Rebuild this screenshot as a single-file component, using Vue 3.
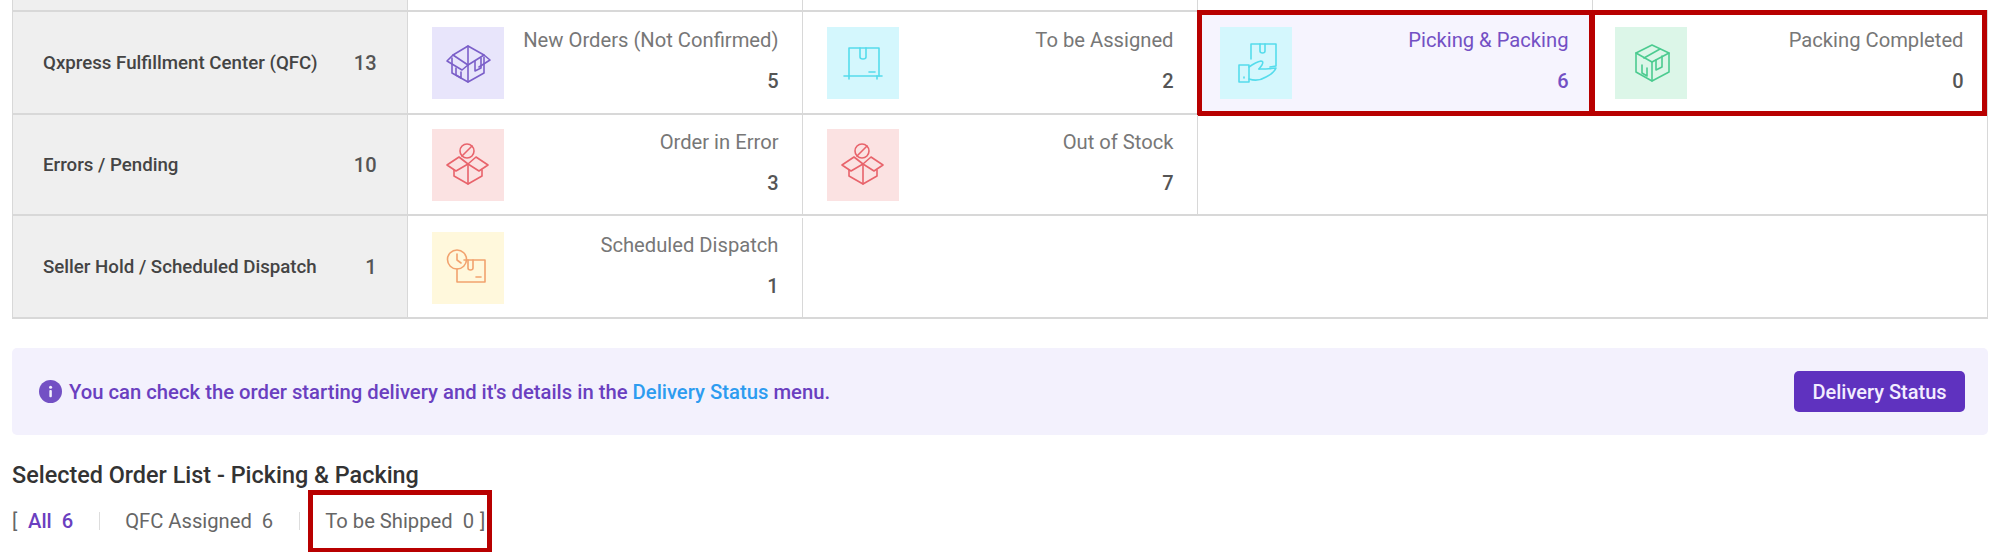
<script setup>
const icons = {
  openBox: [
    'M20 31V46L36 55L52 46V30',
    'M36 19V55',
    'M21 28L36 19L52 28',
    'M36 38L21 28L15 34L30 43Z',
    'M36 38L52 28L58 33L47 40',
    'M43 34V44L49 41V31',
    'M24 41V48L29 51V45'
  ],
  shelfBox: [
    'M22 49V21H52V49',
    'M33 21V30Q33 32 36 32Q39 32 39 30V21',
    'M42 45H48',
    'M17 49H55',
    'M22 49V52M50 49V52'
  ],
  handBox: [
    'M31 32V17H56V39L50 40',
    'M40 17V24Q40 26 42.5 26Q45 26 45 24V17',
    'M19 38H29V55H19Z',
    'M29 40Q36 35 41 34Q44 34 42 38L39 42',
    'M39 42Q48 42 56 41Q54 46 46 50Q38 55 29 52',
    'M24 50V51'
  ],
  cube: [
    'M37 18L54 26V45L37 54L21 45V26Z',
    'M21 26L37 35L54 26',
    'M37 35V54',
    'M45 22L29 31',
    'M41 33V43L47 40V29',
    'M27 38V46L32 49V41'
  ],
  blockedBox: [
    'M35 15A7 7 0 1 0 35 29A7 7 0 1 0 35 15Z',
    'M30 27L40 17',
    'M22 41V47L36 55L50 47V41',
    'M36 35V55',
    'M36 35L27 28L15 36L24 42Z',
    'M36 35L44 28L56 36L47 42Z'
  ],
  clockBox: [
    'M25 18A9.5 9.5 0 1 0 25 37A9.5 9.5 0 1 0 25 18Z',
    'M25 22V28L29 31',
    'M32 28H53V50H25V37',
    'M36 28V36Q36 38 38.5 38Q41 38 41 36V28',
    'M44 45H49'
  ]
}

const rows = [
  {
    name: 'Qxpress Fulfillment Center (QFC)',
    count: 13,
    cells: [
      { label: 'New Orders (Not Confirmed)', value: 5, icon: 'openBox', tone: 'purple' },
      { label: 'To be Assigned', value: 2, icon: 'shelfBox', tone: 'cyan' },
      { label: 'Picking & Packing', value: 6, icon: 'handBox', tone: 'cyan', active: true, marked: true },
      { label: 'Packing Completed', value: 0, icon: 'cube', tone: 'green', marked: true }
    ]
  },
  {
    name: 'Errors / Pending',
    count: 10,
    short: true,
    cells: [
      { label: 'Order in Error', value: 3, icon: 'blockedBox', tone: 'red' },
      { label: 'Out of Stock', value: 7, icon: 'blockedBox', tone: 'red' }
    ]
  },
  {
    name: 'Seller Hold / Scheduled Dispatch',
    count: 1,
    cells: [
      { label: 'Scheduled Dispatch', value: 1, icon: 'clockBox', tone: 'yellow' }
    ]
  }
]
</script>

<template>
  <div class="page">
    <div class="board">
      <div class="stub">
        <div class="stub-head"></div>
        <div class="stub-cell"></div>
        <div class="stub-cell"></div>
        <div class="stub-cell"></div>
      </div>
      <div v-for="row in rows" :key="row.name" class="row" :class="{ 'row--short': row.short }">
        <div class="row-head">
          <span class="row-name">{{ row.name }}</span>
          <span class="row-count">{{ row.count }}</span>
        </div>
        <div
          v-for="cell in row.cells"
          :key="cell.label"
          class="cell"
          :class="{ 'cell--active': cell.active, 'cell--marked': cell.marked }"
        >
          <div class="tile" :class="`tile--${cell.tone}`">
            <svg viewBox="0 0 72 72" width="72" height="72" fill="none" stroke="currentColor" stroke-width="1.6" stroke-linejoin="round" stroke-linecap="round">
              <path v-for="d in icons[cell.icon]" :key="d" :d="d" />
            </svg>
          </div>
          <div class="cell-text">
            <span class="cell-label">{{ cell.label }}</span>
            <span class="cell-value">{{ cell.value }}</span>
          </div>
        </div>
      </div>
    </div>

    <div class="notice">
      <div class="notice-msg">
        <svg class="info" viewBox="0 0 24 24" width="23" height="23">
          <circle cx="12" cy="12" r="12" fill="#7350c4" />
          <rect x="10.8" y="10.5" width="2.6" height="7.5" rx="1" fill="#f3f1fd" />
          <circle cx="12.1" cy="7.6" r="1.6" fill="#f3f1fd" />
        </svg>
        <p class="notice-text">You can check the order starting delivery and it's details in the <a class="notice-link">Delivery Status</a> menu.</p>
      </div>
      <button class="notice-btn" type="button">Delivery Status</button>
    </div>

    <h3 class="list-title">Selected Order List - Picking &amp; Packing</h3>

    <div class="filters">
      <span class="bracket">[</span>
      <span class="filter filter--on">All<b>6</b></span>
      <i class="sep"></i>
      <span class="filter">QFC Assigned<b>6</b></span>
      <i class="sep"></i>
      <span class="filter filter--marked">To be Shipped<b>0</b></span>
      <span class="bracket bracket--end">]</span>
    </div>
  </div>
</template>

<style>
html,
body {
  overflow: hidden;
  background: #fff;
}
</style>

<style scoped>
.page {
  width: 1976px;
  height: 552px;
  margin-left: 12px;
  font-family: Roboto, "Liberation Sans", sans-serif;
  position: relative;
}

.board {
  border-left: 1px solid #d8d8d8;
  border-bottom: 2px solid #d8d8d8;
  box-sizing: border-box;
  width: 1976px;
}

.stub {
  display: flex;
  height: 10px;
}

.stub-head {
  width: 394.5px;
  background: #efefef;
  border-right: 1.5px solid #d8d8d8;
  box-sizing: border-box;
}

.stub-cell {
  width: 395px;
  border-right: 1.5px solid #d8d8d8;
  box-sizing: border-box;
}

.row {
  display: flex;
  height: 103px;
  border-top: 2px solid #d8d8d8;
  border-right: 1.5px solid #d8d8d8;
  box-sizing: border-box;
}

.row--short {
  height: 101px;
}

.row:last-child {
  padding-top: 2px;
}

.row-head {
  width: 394.5px;
  flex: none;
  box-sizing: border-box;
  padding: 0 30px;
  display: flex;
  align-items: center;
  justify-content: space-between;
  background: #efefef;
  border-right: 1.5px solid #d8d8d8;
}

.row:last-child .row-head {
  margin-top: -2px;
}

.row-name {
  font-size: 18.7px;
  font-weight: 500;
  color: #444;
}

.row-count {
  font-size: 20px;
  font-weight: 500;
  color: #555;
}

.cell {
  width: 395px;
  flex: none;
  box-sizing: border-box;
  padding: 0 23px 0 24px;
  display: flex;
  align-items: center;
  gap: 15px;
  border-right: 1.5px solid #d8d8d8;
  position: relative;
}

.cell--active {
  background: #f6f4fe;
}

.cell--active .cell-label,
.cell--active .cell-value {
  color: #7350c4;
}

.cell--marked {
  padding-left: 22px;
}

/* review markup drawn over the cell */
.cell--marked::after {
  content: "";
  position: absolute;
  top: -2px;
  left: -1px;
  right: -2px;
  bottom: -3px;
  border: 5px solid #b80000;
  pointer-events: none;
}

.cell--marked:last-child::after {
  left: -3px;
  right: 0;
}

.tile {
  width: 72px;
  height: 72px;
  flex: none;
}

.tile svg {
  display: block;
}

.tile--purple {
  background: #e8e5fb;
  color: #7b5fc9;
}

.tile--cyan {
  background: #d4f7fd;
  color: #55dcec;
}

.tile--green {
  background: #dcf6e8;
  color: #4ccb90;
}

.tile--red {
  background: #fbe2e2;
  color: #e8636b;
}

.tile--yellow {
  background: #fff8dc;
  color: #f2a26e;
}

.cell-text {
  flex: 1;
  height: 72px;
  display: flex;
  flex-direction: column;
  align-items: flex-end;
  justify-content: space-between;
}

.cell-label {
  font-size: 20.2px;
  line-height: 26px;
  color: #777;
  white-space: nowrap;
}

.cell-value {
  font-size: 20px;
  font-weight: 500;
  line-height: 26px;
  margin-bottom: 5px;
  color: #555;
}

.notice {
  margin-top: 29px;
  height: 87px;
  box-sizing: border-box;
  padding: 0 23px 0 27px;
  display: flex;
  align-items: center;
  justify-content: space-between;
  background: #f3f1fd;
  border-radius: 5px;
}

.notice-msg {
  display: flex;
  align-items: center;
  gap: 7px;
}

.notice-text {
  margin: 0;
  font-size: 20.25px;
  font-weight: 500;
  color: #6a3fc0;
}

.info {
  flex: none;
}

.notice-link {
  color: #2d9cf0;
}

.notice-btn {
  width: 171px;
  height: 41px;
  border: 0;
  border-radius: 5px;
  background: #5f32bf;
  color: #f3edff;
  font-family: inherit;
  font-size: 20px;
  font-weight: 500;
}

.list-title {
  margin: 26px 0 0;
  font-size: 23.4px;
  line-height: 28px;
  font-weight: 500;
  color: #333;
}

.filters {
  margin-top: 18px;
  display: flex;
  align-items: center;
  height: 28px;
  font-size: 20.2px;
  color: #666;
}

.bracket {
  width: 16px;
  font-size: 20px;
}

.bracket--end {
  width: auto;
  margin-left: 6px;
}

.filter {
  display: inline-flex;
  gap: 10px;
  position: relative;
}

.filter b {
  font-weight: 400;
}

.filter--on {
  color: #6a3fc0;
  font-weight: 500;
}

.filter--on b {
  font-weight: 500;
}

.sep {
  width: 1px;
  height: 18px;
  margin: 0 25.5px;
  background: #ddd;
}

/* review markup round the third filter */
.filter--marked::after {
  content: "";
  position: absolute;
  top: -19px;
  bottom: -20px;
  left: -17px;
  right: -18px;
  border: 5px solid #b80000;
  pointer-events: none;
}
</style>
